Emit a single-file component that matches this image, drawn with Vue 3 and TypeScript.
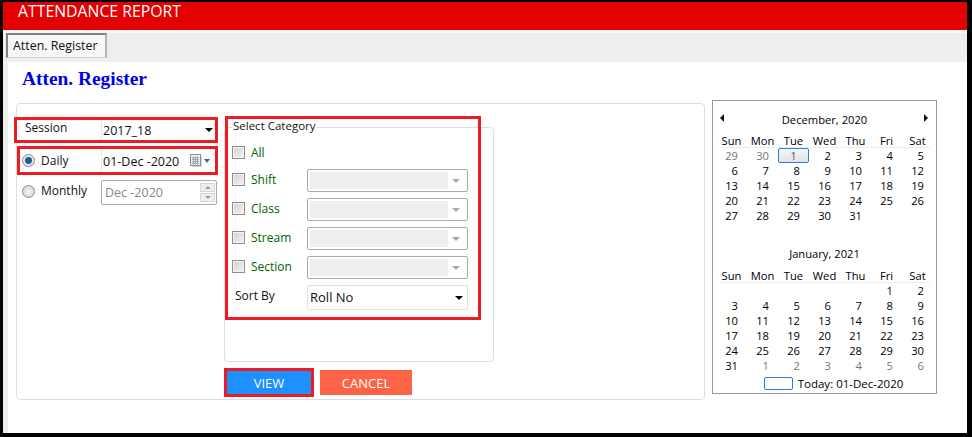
<template>
  <div class="page">
    <div class="top-bar">ATTENDANCE REPORT</div>
    <div class="tab-strip">
      <div class="tab">Atten. Register</div>
    </div>
    <div class="content">
      <h1 class="page-title">Atten. Register</h1>
      <div class="content-row">
        <div class="form-panel">
          <div class="left-col">
            <div class="mark-box session-row">
              <span class="session-label">Session</span>
              <span class="session-value">2017_18</span>
              <span class="caret"></span>
            </div>
            <div class="mark-box daily-row">
              <span class="radio checked"></span>
              <span class="radio-label">Daily</span>
              <span class="daily-value">01-Dec -2020</span>
              <svg class="cal-icon" width="12" height="13" viewBox="0 0 12 13">
                <rect x="0.5" y="0.5" width="10" height="11" fill="#eef0f3" stroke="#8b8f96" />
                <path d="M2 3.500h7M2 5.500h7M2 7.500h7M2 9.500h7M3.500 2.500v8M5.500 2.500v8M7.500 2.500v8" stroke="#a2a6ae" stroke-width="1" fill="none" />
                <path d="M11.500 2v10.500H2" stroke="#d0d2d6" fill="none" />
              </svg>
              <span class="caret small"></span>
            </div>
            <div class="monthly-row">
              <span class="radio"></span>
              <span class="radio-label">Monthly</span>
              <div class="month-input">
                <span>Dec -2020</span>
                <div class="spinner">
                  <span class="spin up"></span>
                  <span class="spin down"></span>
                </div>
              </div>
            </div>
          </div>
          <div class="category-col">
            <fieldset class="category">
              <legend>Select Category</legend>
              <div class="check-row all-row">
                <span class="check"></span>
                <span class="check-label">All</span>
              </div>
              <div v-for="item in categories" :key="item" class="check-row">
                <span class="check"></span>
                <span class="check-label">{{ item }}</span>
                <div class="cat-select">
                  <span class="cat-fill"></span>
                  <span class="caret muted"></span>
                </div>
              </div>
              <div class="sort-row">
                <span class="sort-label">Sort By</span>
                <div class="sort-select">
                  <span class="sort-value">Roll No</span>
                  <span class="caret"></span>
                </div>
              </div>
            </fieldset>
            <div class="category-mark"></div>
            <div class="actions">
              <button class="btn view">VIEW</button>
              <button class="btn cancel">CANCEL</button>
            </div>
          </div>
        </div>
        <div class="calendar">
          <div v-for="(month, i) in months" :key="month.title" class="month" :class="{ second: i === 1 }">
            <div class="month-head">
              <span v-if="i === 0" class="arrow left"></span>
              <span class="month-title">{{ month.title }}</span>
              <span v-if="i === 0" class="arrow right"></span>
            </div>
            <div class="week-head">
              <span v-for="d in weekDays" :key="d">{{ d }}</span>
            </div>
            <div class="days">
              <span
                v-for="(day, n) in month.days"
                :key="n"
                class="day"
                :class="{ other: day.other, selected: day.selected }"
              >{{ day.label }}</span>
            </div>
          </div>
          <div class="today-row">
            <span class="today-box"></span>
            <span>Today: 01-Dec-2020</span>
          </div>
        </div>
      </div>
    </div>
  </div>
</template>

<script setup lang="ts">
interface Day {
  label: string
  other?: boolean
  selected?: boolean
}

const categories = ['Shift', 'Class', 'Stream', 'Section']
const weekDays = ['Sun', 'Mon', 'Tue', 'Wed', 'Thu', 'Fri', 'Sat']

const range = (from: number, to: number, other = false): Day[] => {
  const out: Day[] = []
  for (let n = from; n <= to; n++) out.push({ label: String(n), other })
  return out
}

const blanks = (count: number): Day[] => Array.from({ length: count }, () => ({ label: '' }))

const december = [...range(29, 30, true), ...range(1, 31), ...blanks(2)]
december[2].selected = true

const months = [
  { title: 'December, 2020', days: december },
  { title: 'January, 2021', days: [...blanks(5), ...range(1, 31), ...range(1, 6, true)] }
]
</script>

<style scoped>
* {
  box-sizing: border-box;
}

.page {
  width: 972px;
  height: 437px;
  background: #000;
  padding: 2px 5px 4px 3px;
  display: flex;
  flex-direction: column;
  font-family: "Open Sans", "Noto Sans", sans-serif;
  font-size: 12px;
  color: #111;
  overflow: hidden;
}

.top-bar {
  height: 28px;
  flex: none;
  background: #e30000;
  color: #fff;
  font-size: 15.800px;
  line-height: 18px;
  padding-left: 15px;
}

.tab-strip {
  height: 32px;
  flex: none;
  background: #eeeeee;
  border-top: 3px solid #f8f8f8;
  padding-left: 3px;
  display: flex;
  align-items: flex-start;
}

.tab {
  width: 101px;
  height: 25px;
  background: #f7f7f7;
  border: 1px solid #d0d0d0;
  border-top: 2px solid #808080;
  border-left: 2px solid #808080;
  border-right: 2px solid #b4b4b4;
  font-size: 12.400px;
  line-height: 22px;
  padding-left: 5px;
  color: #111;
  white-space: nowrap;
}

.content {
  flex: 1;
  border-left: 5px solid #eeeeee;
  background: #fff;
  padding: 7px 0 0 8px;
}

.page-title {
  margin: 0 0 0 6px;
  height: 31px;
  font-family: "Liberation Serif", serif;
  font-size: 19.400px;
  line-height: 20px;
  font-weight: bold;
  color: #0000ee;
}

.content-row {
  display: flex;
  align-items: flex-start;
}

.form-panel {
  width: 689px;
  height: 297px;
  margin-top: 3px;
  border: 1px solid #d8dfe5;
  border-radius: 4px;
  display: flex;
  padding-top: 13px;
}

.left-col {
  width: 204px;
  margin-left: -3px;
  flex: none;
}

.mark-box {
  border: 3px solid #ed1c24;
  display: flex;
  align-items: center;
  background: #fff;
}

.session-row {
  height: 26px;
}

.session-label {
  width: 84px;
  padding-left: 8px;
  margin-top: -5px;
  flex: none;
}

.session-value {
  flex: 1;
  height: 100%;
  border-left: 1px solid #e8e8e8;
  padding-left: 1px;
  line-height: 22px;
  font-size: 12.500px;
}

.caret {
  width: 0;
  height: 0;
  border-left: 4px solid transparent;
  border-right: 4px solid transparent;
  border-top: 4px solid #000;
  margin-right: 2px;
  flex: none;
}

.caret.small {
  border-left-width: 3px;
  border-right-width: 3px;
  border-top-color: #56607a;
  margin: 0 5px 0 2px;
}

.caret.muted {
  border-top-color: #a8a8a8;
  margin-right: 5px;
}

.daily-row {
  height: 29px;
  margin: 3px 0 0 3px;
  padding-left: 2px;
}

.radio {
  width: 13px;
  height: 13px;
  border-radius: 50%;
  border: 1px solid #8a8a8a;
  background: radial-gradient(circle, #f4f4f4, #d0d0d0);
  flex: none;
}

.radio.checked {
  background: radial-gradient(circle, #1c5f95 0 3px, #dfe8ef 4px);
}

.radio-label {
  margin-left: 6px;
  width: 60px;
  flex: none;
  margin-top: -1px;
}

.daily-value {
  flex: 1;
  height: 100%;
  border-left: 1px solid #e8e8e8;
  padding-left: 1px;
  line-height: 25px;
  font-size: 12.500px;
  white-space: nowrap;
}

.cal-icon {
  flex: none;
}

.monthly-row {
  display: flex;
  align-items: center;
  height: 25px;
  margin: 5px 0 0 8px;
}

.monthly-row .radio {
  margin-top: -3px;
}

.monthly-row .radio-label {
  margin-top: -4px;
}

.month-input {
  width: 116px;
  height: 25px;
  border: 1px solid #aaa;
  border-radius: 2px;
  color: #888;
  font-size: 12.500px;
  display: flex;
  align-items: center;
  justify-content: space-between;
  padding: 0 1px 0 3px;
  flex: none;
}

.spinner {
  display: flex;
  flex-direction: column;
  gap: 1px;
}

.spin {
  width: 15px;
  height: 9px;
  background: #eeeeee;
  border: 1px solid #d6d6d6;
  display: flex;
  align-items: center;
  justify-content: center;
}

.spin::after {
  content: "";
  border-left: 3px solid transparent;
  border-right: 3px solid transparent;
}

.spin.up::after {
  border-bottom: 3px solid #999;
}

.spin.down::after {
  border-top: 3px solid #999;
}

.category-col {
  width: 270px;
  margin-left: 6px;
  margin-top: 3px;
  position: relative;
  flex: none;
}

.category {
  margin: 0;
  width: 270px;
  height: 242px;
  border: 1px solid #d8dfe5;
  border-radius: 4px;
  padding: 0 0 0 7px;
}

.category legend {
  padding: 0 1px 2px;
  font-size: 11.500px;
  line-height: 12px;
  color: #111;
}

.category-mark {
  position: absolute;
  left: 1px;
  top: -4px;
  width: 256px;
  height: 204px;
  border: 3px solid #ed1c24;
  pointer-events: none;
}

.check-row {
  height: 29px;
  display: flex;
  align-items: center;
}

.all-row {
  height: 27px;
  margin-top: 6px;
  margin-bottom: -1px;
}

.check {
  width: 13px;
  height: 13px;
  border: 1px solid #8e8e8e;
  background: linear-gradient(135deg, #d0d0d0, #f4f4f4);
  box-shadow: inset 0 0 0 1px #f4f4f4;
  flex: none;
  margin-top: -3px;
}

.check-label {
  width: 56px;
  margin-left: 6px;
  color: #006400;
  flex: none;
  margin-top: -2px;
}

.cat-select {
  width: 161px;
  height: 23px;
  border: 1px solid #aaa;
  border-radius: 2px;
  padding: 2px;
  display: flex;
  align-items: center;
  justify-content: space-between;
}

.cat-fill {
  width: 138px;
  height: 17px;
  background: #eeeeee;
}

.sort-row {
  display: flex;
  align-items: center;
  margin-top: 3px;
  height: 25px;
}

.sort-label {
  width: 75px;
  padding-left: 3px;
  margin-top: -4px;
  flex: none;
}

.sort-select {
  width: 161px;
  height: 25px;
  border: 1px solid #e0e0e0;
  border-radius: 2px;
  display: flex;
  align-items: center;
  justify-content: space-between;
  padding-left: 2px;
  font-size: 13px;
}

.sort-value {
  margin-top: -2px;
}

.sort-select .caret {
  margin-right: 4px;
}

.actions {
  display: flex;
  align-items: center;
  gap: 6px;
  margin-top: 6px;
}

.btn {
  border: none;
  color: #fff;
  font-family: inherit;
  font-size: 13px;
  padding: 0;
}

.view {
  width: 90px;
  height: 29px;
  background: #1e90ff;
  border: 3px solid #ed1c24;
}

.cancel {
  width: 92px;
  height: 25px;
  background: #ff6347;
}

.calendar {
  width: 225px;
  height: 294px;
  margin-left: 7px;
  border: 1px solid #999;
  padding: 0 8px;
  font-size: 11.200px;
  color: #000;
}

.month {
  height: 135px;
}

.month.second {
  height: auto;
}

.month.second .month-title {
  margin-top: -2px;
}

.month-head {
  display: flex;
  justify-content: center;
  align-items: center;
  height: 36px;
  position: relative;
}

.arrow {
  position: absolute;
  top: 13px;
  width: 0;
  height: 0;
  border-top: 4px solid transparent;
  border-bottom: 4px solid transparent;
}

.arrow.left {
  left: -1px;
  border-right: 4px solid #111;
}

.arrow.right {
  right: 0;
  border-left: 4px solid #111;
}

.week-head {
  display: grid;
  grid-template-columns: repeat(7, 31px);
  width: 217px;
  height: 13px;
  line-height: 12px;
  margin: -2px 0 0 -5px;
  text-align: center;
  background: linear-gradient(#ececec, #ececec) no-repeat 5px 100% / 209px 1px;
}

.days {
  display: grid;
  grid-template-columns: repeat(7, 31px);
  grid-auto-rows: 15px;
  line-height: 15px;
  width: 217px;
  margin-left: -5px;
}

.day {
  text-align: right;
  padding-right: 9px;
}

.day.other {
  color: #777;
}

.day.selected {
  border: 1px solid #2f7ed8;
  border-radius: 2px;
  background: linear-gradient(#f6f6f6, #e2e2e2);
  color: #2a5db0;
  line-height: 13px;
  padding-right: 0;
  text-align: center;
}

.today-row {
  display: flex;
  align-items: center;
  justify-content: center;
  gap: 5px;
  height: 20px;
  padding-left: 18px;
  font-size: 11.500px;
}

.today-box {
  width: 29px;
  height: 13px;
  border: 1px solid #2f7ed8;
  border-radius: 2px;
  flex: none;
}
</style>

<style>
html,
body {
  margin: 0;
  background: #000;
}
</style>
